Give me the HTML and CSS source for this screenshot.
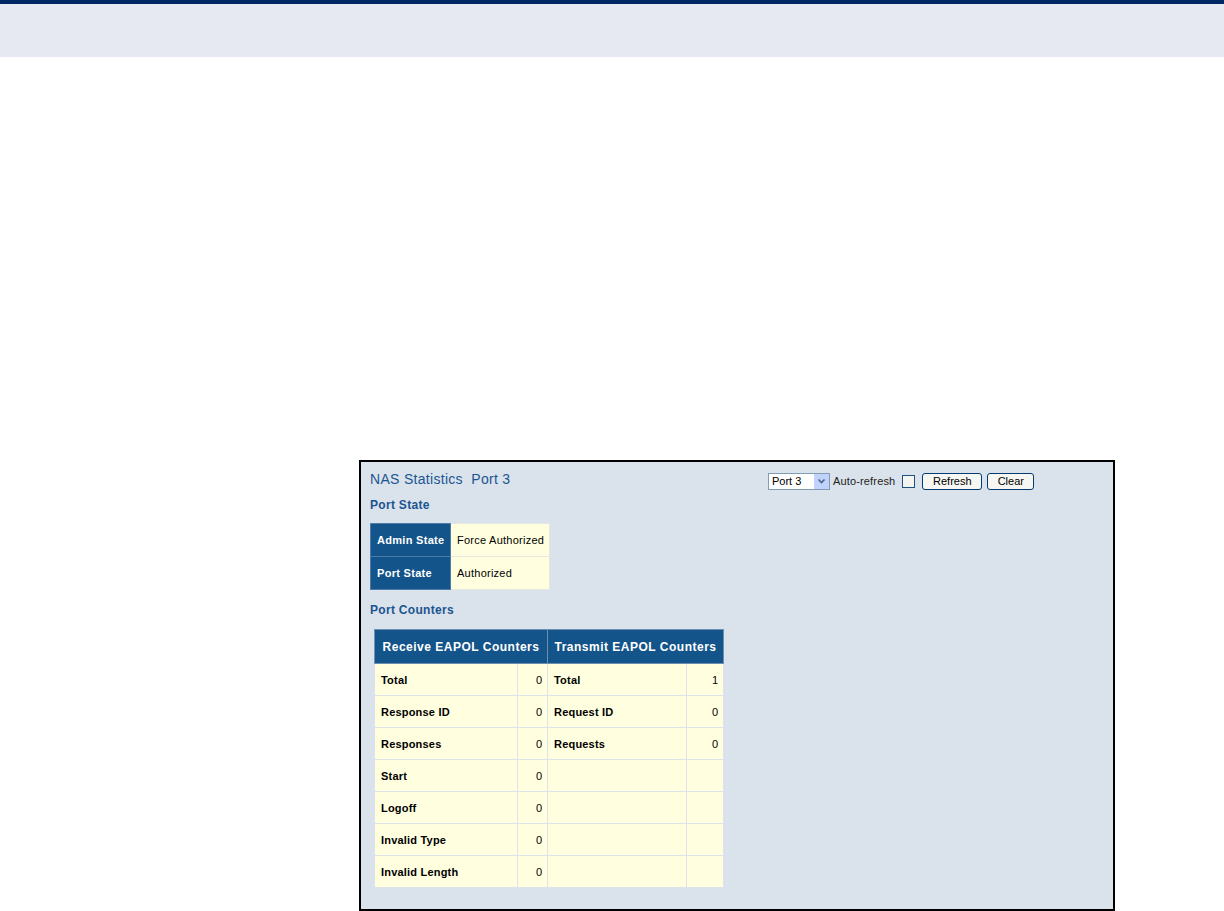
FILE: index.html
```html
<!DOCTYPE html>
<html>
   <head>
      <meta name="viewport" content="width=device-width, initial-scale=1.0">
      <title>NAS Statistics</title>
      <link rel="stylesheet" href="styles.css">
   </head>
<body>
<div class="topBar"></div>
<div class="band"></div>
<div class="page">
	<div class="frame">
		<div class="topRow">
			<h1 class="pageTitle">NAS Statistics&nbsp; Port 3</h1>
			<div class="controls">
				<div class="portSelect">
					<span class="portValue">Port 3</span>
					<span class="arrowBox">
						<svg width="9" height="6" viewBox="0 0 9 6"><path d="M1.5 1.5 L4.5 4.5 L7.5 1.5" fill="none" stroke="#4d6185" stroke-width="1.6"/></svg>
					</span>
				</div>
				<span class="autoLabel">Auto-refresh</span>
				<span class="checkBox"></span>
				<button class="btn btnRefresh">Refresh</button>
				<button class="btn btnClear">Clear</button>
			</div>
		</div>
		<h2 class="sectionTitle">Port State</h2>
		<table class="stateTable">
			<tr>
				<th>Admin State</th>
				<td>Force Authorized</td>
			</tr>
			<tr>
				<th>Port State</th>
				<td>Authorized</td>
			</tr>
		</table>
		<h2 class="sectionTitle countersTitle">Port Counters</h2>
		<table class="counterTable">
			<tr>
				<th colspan="2" class="headRx">Receive EAPOL Counters</th>
				<th colspan="2" class="headTx">Transmit EAPOL Counters</th>
			</tr>
			<tr><td class="lbl lblRx">Total</td><td class="num numRx">0</td><td class="lbl lblTx">Total</td><td class="num numTx">1</td></tr>
			<tr><td class="lbl">Response ID</td><td class="num">0</td><td class="lbl">Request ID</td><td class="num">0</td></tr>
			<tr><td class="lbl">Responses</td><td class="num">0</td><td class="lbl">Requests</td><td class="num">0</td></tr>
			<tr><td class="lbl">Start</td><td class="num">0</td><td></td><td></td></tr>
			<tr><td class="lbl">Logoff</td><td class="num">0</td><td></td><td></td></tr>
			<tr><td class="lbl">Invalid Type</td><td class="num">0</td><td></td><td></td></tr>
			<tr><td class="lbl">Invalid Length</td><td class="num">0</td><td></td><td></td></tr>
		</table>
	</div>
</div>
</body>
</html>
```

FILE: styles.css
```css
html, body, div, span, h1, h2, table, tr, th, td {
	margin: 0;
	padding: 0;
	border: 0;
	font: inherit;
}
body {
	margin: 0;
	background: #ffffff;
	font-family: "Liberation Sans", Arial, sans-serif;
	font-size: 11px;
	color: #000000;
}
.topBar {
	height: 4px;
	background: #002663;
}
.band {
	height: 53px;
	background: #e6e9f2;
}
.page {
	padding: 403px 0 0 359px;
}
.frame {
	box-sizing: border-box;
	width: 756px;
	height: 451px;
	border: 2px solid #000000;
	background: #dae2eb;
	padding: 8px 0 0 9px;
}
.topRow {
	display: flex;
	align-items: flex-start;
}
.pageTitle {
	width: 398px;
	font-size: 14px;
	letter-spacing: 0.3px;
	color: #1a5591;
	line-height: 16px;
	padding-top: 1px;
}
.controls {
	display: flex;
	align-items: center;
	height: 18px;
	margin-top: 2px;
}
.portSelect {
	box-sizing: border-box;
	width: 62px;
	height: 17px;
	background: #ffffff;
	border: 1px solid #7f9db9;
	display: flex;
	align-items: center;
	justify-content: space-between;
}
.portValue {
	padding-left: 3px;
	font-size: 11px;
}
.arrowBox {
	width: 15px;
	height: 15px;
	background: #c1d3fb;
	display: flex;
	align-items: center;
	justify-content: center;
}
.autoLabel {
	margin-left: 3px;
	font-size: 11px;
	letter-spacing: 0.15px;
	color: #222222;
}
.checkBox {
	box-sizing: border-box;
	width: 13px;
	height: 13px;
	margin-left: 7px;
	border: 1px solid #1c5180;
	background: #f4f4f0;
}
.btn {
	box-sizing: border-box;
	height: 17px;
	margin-left: 7px;
	padding: 0;
	border: 1px solid #003c74;
	border-radius: 3px;
	background: #f6f6f2;
	font-family: "Liberation Sans", Arial, sans-serif;
	font-size: 11px;
	line-height: 15px;
	color: #000000;
}
.btnRefresh {
	width: 60px;
}
.btnClear {
	width: 47px;
	margin-left: 5px;
}
.sectionTitle {
	font-size: 12px;
	font-weight: bold;
	color: #1a5591;
	line-height: 14px;
	margin-top: 8px;
	letter-spacing: 0.3px;
}
.stateTable {
	border-collapse: collapse;
	margin-top: 11px;
}
.stateTable th, .stateTable td {
	height: 33px;
	border: 1px solid #dae2eb;
	font-size: 11px;
	text-align: left;
	vertical-align: middle;
}
.stateTable th {
	width: 80px;
	box-sizing: border-box;
	background: #13548a;
	color: #ffffff;
	font-weight: bold;
	padding-left: 6px;
	border-color: #4f7ca6;
	letter-spacing: 0.3px;
}
.stateTable td {
	width: 99px;
	box-sizing: border-box;
	background: #ffffe0;
	padding-left: 6px;
	border-color: #e4e8e0;
	letter-spacing: 0.25px;
}
.countersTitle {
	margin-top: 13px;
}
.counterTable {
	border-collapse: collapse;
	margin: 12px 0 0 4px;
}
.counterTable th {
	height: 33px;
	background: #13548a;
	color: #ffffff;
	font-size: 12px;
	font-weight: bold;
	letter-spacing: 0.5px;
	text-align: center;
	border: 1px solid #6d8fb2;
}
.counterTable td {
	height: 31px;
	background: #ffffe0;
	border: 1px solid #dde3ea;
	vertical-align: middle;
}
.lbl {
	font-weight: bold;
	padding-left: 6px;
	letter-spacing: 0.2px;
}
.num {
	text-align: right;
	padding-right: 5px;
}
.lblRx {
	width: 136px;
}
.numRx {
	width: 24px;
}
.lblTx {
	width: 132px;
}
.numTx {
	width: 31px;
}
```
